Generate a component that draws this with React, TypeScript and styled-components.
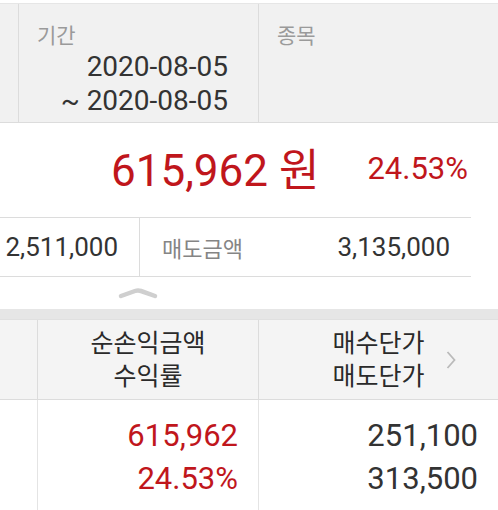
import React from "react";
import styled, { createGlobalStyle } from "styled-components";

const Global = createGlobalStyle`
  html, body { margin: 0; padding: 0; background: #ffffff; }
  body { font-family: Roboto, "Noto Sans CJK KR", sans-serif; }
`;

const Page = styled.div`
  width: 498px;
  height: 510px;
  overflow: hidden;
  background: #ffffff;
  padding-top: 3px;
  box-sizing: border-box;
  position: relative;
`;

const FilterHeader = styled.div`
  display: grid;
  grid-template-columns: 18px 240px 240px;
  height: 120px;
  background: #f1f1f1;
  border-top: 1px solid #e6e6e6;
  border-bottom: 1px solid #dcdcdc;
  box-sizing: border-box;
`;

const FilterCell = styled.div<{ $first?: boolean }>`
  border-left: ${(p) => (p.$first ? "none" : "1px solid #dcdcdc")};
  padding: 18px 30px 0 18px;
  display: flex;
  flex-direction: column;
`;

const Label = styled.div`
  font-size: 21px;
  color: #9a9a9a;
  line-height: 28px;
`;

const DateLine = styled.div`
  font-size: 28px;
  color: #333333;
  line-height: 34px;
  text-align: right;
`;

const Summary = styled.div`
  height: 94px;
  display: flex;
  align-items: center;
  justify-content: flex-end;
  padding: 0 30px 6px 0;
  box-sizing: border-box;
  gap: 48px;
  color: #c0161c;
`;

const BigAmount = styled.div`
  font-size: 44px;
`;

const Rate = styled.div`
  font-size: 31px;
  padding-top: 2px;
`;

const AmountRow = styled.div`
  width: 471px;
  height: 60px;
  display: grid;
  grid-template-columns: 140px 1fr;
  border-top: 1px solid #dcdcdc;
  border-bottom: 1px solid #dcdcdc;
  box-sizing: border-box;
`;

const AmountCell = styled.div<{ $divider?: boolean }>`
  display: flex;
  align-items: center;
  justify-content: space-between;
  border-right: ${(p) => (p.$divider ? "1px solid #dcdcdc" : "none")};
  padding: ${(p) => (p.$divider ? "0 21px 0 0" : "0 21px 0 22px")};
`;

const AmountLabel = styled.span`
  font-size: 22px;
  color: #858585;
`;

const AmountValue = styled.span`
  font-size: 26px;
  color: #333333;
  margin-left: auto;
  white-space: nowrap;
`;

const Handle = styled.div`
  height: 32px;
  display: flex;
  align-items: center;
  padding-left: 118px;
`;

const Band = styled.div`
  height: 10px;
  background: #e6e6e6;
`;

const TableHeader = styled.div`
  display: grid;
  grid-template-columns: 37px 221px 240px;
  height: 81px;
  background: #f4f4f4;
  border-top: 1px solid #e0e0e0;
  border-bottom: 1px solid #dcdcdc;
  box-sizing: border-box;
  position: relative;
`;

const HeadCell = styled.div<{ $first?: boolean }>`
  border-left: ${(p) => (p.$first ? "none" : "1px solid #dcdcdc")};
  display: flex;
  flex-direction: column;
  align-items: center;
  justify-content: center;
  font-size: 25px;
  line-height: 33px;
  color: #2a2a2a;
`;

const ScrollHint = styled.div`
  position: absolute;
  right: 42px;
  top: 30px;
  width: 10px;
  height: 20px;
`;

const DataRow = styled.div`
  display: grid;
  grid-template-columns: 37px 221px 240px;
  height: 110px;
`;

const DataCell = styled.div<{ $first?: boolean; $red?: boolean }>`
  border-left: ${(p) => (p.$first ? "none" : "1px solid #e4e4e4")};
  display: flex;
  flex-direction: column;
  align-items: flex-end;
  padding: 14px 20px 0 0;
  font-size: 31px;
  line-height: 43px;
  color: ${(p) => (p.$red ? "#c0161c" : "#333333")};
`;

export default function App() {
  return (
    <>
      <Global />
      <Page>
        <FilterHeader>
          <FilterCell $first />
          <FilterCell>
            <Label>기간</Label>
            <DateLine>2020-08-05</DateLine>
            <DateLine>~ 2020-08-05</DateLine>
          </FilterCell>
          <FilterCell>
            <Label>종목</Label>
          </FilterCell>
        </FilterHeader>

        <Summary>
          <BigAmount>615,962 원</BigAmount>
          <Rate>24.53%</Rate>
        </Summary>

        <AmountRow>
          <AmountCell $divider>
            <AmountValue>2,511,000</AmountValue>
          </AmountCell>
          <AmountCell>
            <AmountLabel>매도금액</AmountLabel>
            <AmountValue>3,135,000</AmountValue>
          </AmountCell>
        </AmountRow>

        <Handle>
          <svg width="40" height="12" viewBox="0 0 40 12">
            <path
              d="M3 9 L17 4 Q20 3 23 4 L37 9"
              fill="none"
              stroke="#cfcfcf"
              strokeWidth="4.5"
              strokeLinecap="round"
              strokeLinejoin="round"
            />
          </svg>
        </Handle>

        <Band />

        <TableHeader>
          <HeadCell $first />
          <HeadCell>
            <span>순손익금액</span>
            <span>수익률</span>
          </HeadCell>
          <HeadCell>
            <span>매수단가</span>
            <span>매도단가</span>
          </HeadCell>
          <ScrollHint>
            <svg width="10" height="20" viewBox="0 0 10 20">
              <path d="M1.5 2 L8.5 10 L1.5 18" fill="none" stroke="#bababa" strokeWidth="1.8" />
            </svg>
          </ScrollHint>
        </TableHeader>

        <DataRow>
          <DataCell $first />
          <DataCell $red>
            <span>615,962</span>
            <span>24.53%</span>
          </DataCell>
          <DataCell>
            <span>251,100</span>
            <span>313,500</span>
          </DataCell>
        </DataRow>
      </Page>
    </>
  );
}
